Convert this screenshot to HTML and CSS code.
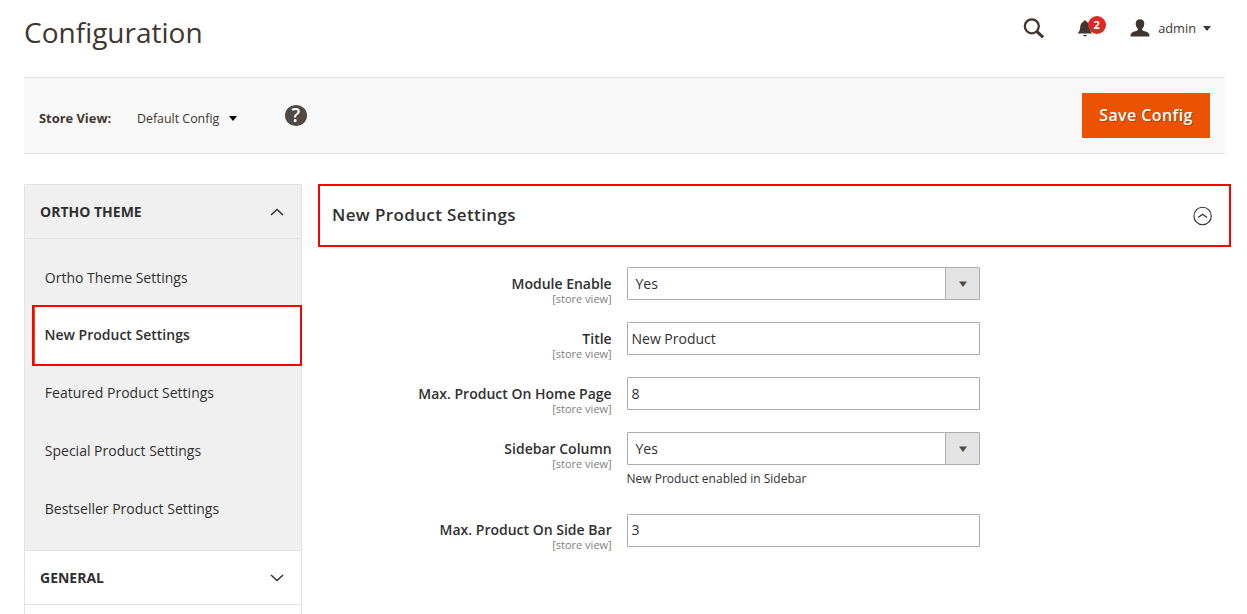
FILE: index.html
```html
<!DOCTYPE html>
<html lang="en">
<head>
<meta charset="utf-8">
<title>Configuration</title>
<link rel="stylesheet" href="styles.css">
</head>
<body>
<div class="page">
  <header class="page-header">
    <h1 class="page-title">Configuration</h1>
    <div class="header-actions">
      <svg class="icon-search" width="22" height="22" viewBox="0 0 22 22"><circle cx="8.8" cy="8.3" r="7" fill="none" stroke="#41362f" stroke-width="2.300"/><path d="M13.800 13.300l6.300 6" stroke="#41362f" stroke-width="3"/></svg>
      <div class="notifications">
        <svg class="icon-bell" width="16" height="17" viewBox="0 0 16 17"><path d="M7 .5h2l.5 1.200c2.200.8 3 2.600 3.200 5.500.2 3.200.9 4.700 2.600 6.300H.5c1.700-1.600 2.500-3.100 2.700-6.300C3.400 4.300 4.300 2.500 6.500 1.700zM6 14.900h4c-.2 1.800-3.800 1.800-4 0z" fill="#41362f"/></svg>
        <span class="badge">2</span>
      </div>
      <div class="account">
        <svg class="icon-user" width="20" height="18" viewBox="0 0 20 18"><path d="M10 .3c2.900 0 4.300 1.700 4.300 4.300 0 2.200-.8 4.100-2.200 5.200v1.300c.8.900 4.300 1.500 6 2.600 1.100.8 1.400 2 1.400 3.800H.5c0-1.800.3-3 1.400-3.800 1.700-1.100 5.200-1.700 6-2.600V9.800C6.500 8.700 5.700 6.800 5.700 4.600 5.700 2 7.100.3 10 .3z" fill="#41362f"/></svg>
        <span class="account-name">admin</span>
        <svg width="8" height="5" viewBox="0 0 8 5"><path d="M0 0h8L4 5z" fill="#41362f"/></svg>
      </div>
    </div>
  </header>

  <div class="toolbar">
    <span class="store-label">Store View:</span>
    <span class="store-value">Default Config</span>
    <svg class="store-caret" width="8" height="5" viewBox="0 0 8 5"><path d="M0 0h8L4 5z" fill="#000"/></svg>
    <span class="help">?</span>
    <button class="save" type="button">Save Config</button>
  </div>

  <div class="columns">
    <nav class="sidebar">
      <div class="group-title group-open">ORTHO THEME
        <svg width="14" height="8" viewBox="0 0 14 8"><path d="M1 7l6-5.500L13 7" fill="none" stroke="#303030" stroke-width="1.500"/></svg>
      </div>
      <ul class="group-items">
        <li class="item">Ortho Theme Settings</li>
        <li class="item item-active">New Product Settings</li>
        <li class="item">Featured Product Settings</li>
        <li class="item">Special Product Settings</li>
        <li class="item">Bestseller Product Settings</li>
      </ul>
      <div class="group-title">GENERAL
        <svg width="14" height="8" viewBox="0 0 14 8"><path d="M1 1l6 5.500L13 1" fill="none" stroke="#303030" stroke-width="1.500"/></svg>
      </div>
    </nav>

    <main class="content">
      <div class="section-head">
        <h2 class="section-title">New Product Settings</h2>
        <svg width="20" height="20" viewBox="0 0 20 20" fill="none" stroke="#303030"><circle cx="9.600" cy="10" r="8.700" stroke-width="1.100"/><path d="M5.100 11.600L9.600 8.300l4.500 3.300" stroke-width="1.200"/></svg>
      </div>
      <div class="fields">
        <div class="field">
          <div class="label">Module Enable<small>[store view]</small></div>
          <div class="control select">Yes<span class="arrow"><svg width="8" height="6" viewBox="0 0 8 6"><path d="M0 .5h8L4 6z" fill="#514943"/></svg></span></div>
        </div>
        <div class="field">
          <div class="label">Title<small>[store view]</small></div>
          <div class="control">New Product</div>
        </div>
        <div class="field">
          <div class="label">Max. Product On Home Page<small>[store view]</small></div>
          <div class="control">8</div>
        </div>
        <div class="field">
          <div class="label">Sidebar Column<small>[store view]</small></div>
          <div>
            <div class="control select">Yes<span class="arrow"><svg width="8" height="6" viewBox="0 0 8 6"><path d="M0 .5h8L4 6z" fill="#514943"/></svg></span></div>
            <p class="note">New Product enabled in Sidebar</p>
          </div>
        </div>
        <div class="field field-last">
          <div class="label">Max. Product On Side Bar<small>[store view]</small></div>
          <div class="control">3</div>
        </div>
      </div>
    </main>
  </div>
</div>
</body>
</html>
```

FILE: styles.css
```css
* { box-sizing: border-box; }
body {
  margin: 0;
  background: #fff;
  color: #303030;
  font-family: "Open Sans", "Noto Sans", sans-serif;
  font-size: 14px;
  line-height: 20px;
}
svg { display: block; flex: none; }
.page { height: 614px; overflow: hidden; padding-left: 24px; }
.page-header {
  display: flex;
  justify-content: space-between;
  height: 77px;
  padding: 14px 36px 0 0;
}
.page-title {
  margin: 0;
  color: #41362f;
  font-size: 28px;
  font-weight: 400;
  line-height: 37px;
}
.header-actions { display: flex; height: 28px; align-items: center; }
.icon-search { margin-top: 1px; }
.notifications { position: relative; margin: 1px 0 0 32px; }
.badge {
  position: absolute;
  left: 11px;
  top: -4px;
  width: 18px;
  height: 18px;
  border-radius: 9px;
  background: #e22626;
  color: #fff;
  font-size: 11px;
  font-weight: 700;
  line-height: 18px;
  text-align: center;
}
.account { display: flex; align-items: center; margin-left: 37.500px; }
.icon-user { margin-top: -1px; }
.account-name { margin: 0 7px 0 8px; color: #41362f; font-size: 12.800px; }
.toolbar {
  display: flex;
  align-items: center;
  width: 1201px;
  height: 77px;
  padding: 0 15px;
  border: solid #e3e3e3;
  border-width: 1px 0;
  background: #f8f8f8;
  color: #41362f;
}
.store-label { width: 72px; padding-top: 5px; font-size: 12.900px; font-weight: 700; white-space: nowrap; }
.store-value { width: 83px; margin-left: 26px; padding-top: 6px; font-size: 12.400px; white-space: nowrap; }
.store-caret { margin: 5px 0 0 9px; }
.help {
  width: 21.500px;
  height: 21px;
  margin-left: 48px;
  border-radius: 50%;
  background: #514943;
  color: #fff;
  font-size: 19px;
  font-weight: 600;
  line-height: 21px;
  text-align: center;
}
.save {
  width: 128px;
  height: 45px;
  margin-left: auto;
  padding: 0;
  border: 0;
  background: #eb5202;
  color: #fff;
  font: 600 16px/45px "Open Sans", sans-serif;
  letter-spacing: .4px;
  text-shadow: 1px 1px 0 rgba(0, 0, 0, .25);
}
.columns { display: flex; gap: 16px; padding-top: 30px; }
.sidebar { width: 278px; height: 440px; border: 1px solid #e3e3e3; }
.group-title {
  display: flex;
  align-items: center;
  justify-content: space-between;
  height: 54px;
  padding: 0 17px 0 15px;
  border-bottom: 1px solid #e3e3e3;
  font-weight: 700;
}
.group-open, .group-items { background: #f0f0f0; }
.group-items {
  height: 312px;
  margin: 0;
  padding: 10px 0 0;
  border-bottom: 1px solid #e3e3e3;
  list-style: none;
}
.item { height: 58px; padding-left: 19.800px; line-height: 58px; }
.item-active {
  position: relative;
  height: 61px;
  margin: -2px -1px -2px 7px;
  padding-left: 10.500px;
  border: 2px solid #f00;
  background: #fff;
  box-shadow: inset 1px 0 #eb5202;
  font-weight: 600;
  line-height: 56px;
}
.section-head {
  display: flex;
  align-items: center;
  justify-content: space-between;
  width: 913px;
  height: 63px;
  padding: 0 16px 0 12px;
  border: 2px solid #f00;
}
.section-title {
  margin: 0;
  padding-bottom: 2px;
  font-size: 17px;
  font-weight: 600;
  letter-spacing: .38px;
}
.fields { display: grid; gap: 22px; padding-top: 20px; }
.field { display: grid; grid-template-columns: 293.700px 353px; gap: 15.300px; height: 33px; }
.field:nth-child(4) { height: 60px; }
.label { padding-top: 7px; text-align: right; font-weight: 600; white-space: nowrap; }
.label small {
  display: block;
  margin-top: -1px;
  color: #808080;
  font-size: 11px;
  font-weight: 400;
  line-height: 12px;
}
.control {
  height: 33px;
  padding-left: 3.500px;
  border: 1px solid #adadad;
  border-radius: 1px;
  line-height: 32px;
}
.select { display: flex; justify-content: space-between; padding-left: 7.500px; }
.field-last .label { padding-top: 6px; }
.field-last .control { line-height: 30px; }
.arrow {
  display: flex;
  align-items: center;
  justify-content: center;
  width: 34px;
  padding-left: 1px;
  border-left: 1px solid #adadad;
  background: #e3e3e3;
}
.note { margin: 4px 0 0 -.5px; font-size: 12px; line-height: 20px; }
```
